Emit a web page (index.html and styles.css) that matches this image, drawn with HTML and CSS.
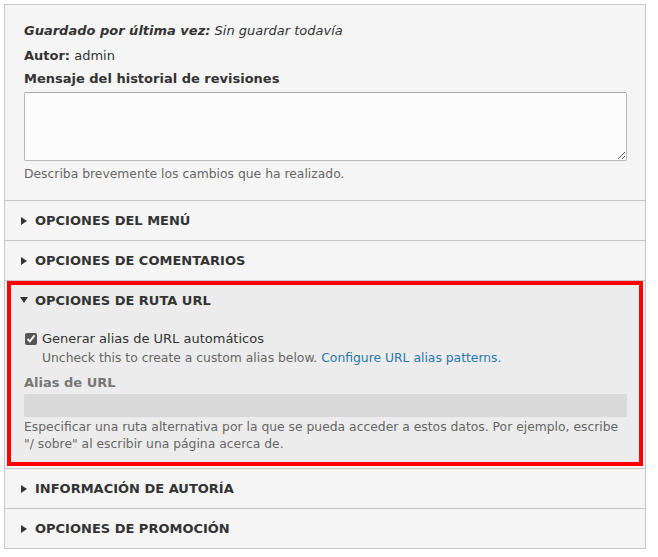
FILE: index.html
```html
<!DOCTYPE html>
<html>
<head>
<meta charset="utf-8">
<link rel="stylesheet" href="styles.css">
</head>
<body>
	<div id="lateral">
		<div class="meta">
			<p class="linha"><em><b>Guardado por última vez:</b> Sin guardar todavía</em></p>
			<p class="linha ultima"><b>Autor:</b> admin</p>
			<label class="rotulo" for="revisao">Mensaje del historial de revisiones</label>
			<textarea id="revisao"></textarea>
			<p class="ajuda">Describa brevemente los cambios que ha realizado.</p>
		</div>

		<details class="grupo">
			<summary>Opciones del menú</summary>
		</details>

		<details class="grupo">
			<summary>Opciones de comentarios</summary>
		</details>

		<div class="grupo aberto">
			<details class="destaque" open>
				<summary>Opciones de ruta URL</summary>
				<div class="corpo">
					<div class="check">
						<input type="checkbox" id="auto" checked>
						<label for="auto">Generar alias de URL automáticos</label>
					</div>
					<p class="ajuda recuo">Uncheck this to create a custom alias below. <a href="#">Configure URL alias patterns.</a></p>
					<label class="rotulo desligado" for="alias">Alias de URL</label>
					<input type="text" id="alias" disabled>
					<p class="ajuda">Especificar una ruta alternativa por la que se pueda acceder a estos datos. Por ejemplo, escribe "/ sobre" al escribir una página acerca de.</p>
				</div>
			</details>
		</div>

		<details class="grupo">
			<summary>Información de autoría</summary>
		</details>

		<details class="grupo">
			<summary>Opciones de promoción</summary>
		</details>
	</div>
</body>
</html>
```

FILE: styles.css
```css
body{
	margin: 0;
	font-family: "DejaVu Sans", "Liberation Sans", sans-serif;
	font-size: 13px;
	color: #333;
	background: #fff;
}

#lateral{
	box-sizing: border-box;
	width: 642px;
	margin: 4px 0 0 4px;
	border: 1px solid #c6c6c6;
	background: #f5f5f5;
}

.meta{
	padding: 17px 18px 18px 19px;
}

.linha{
	margin: 0 0 7px;
	line-height: 18px;
}

.linha.ultima{
	margin-bottom: 5px;
}

.rotulo{
	display: block;
	font-weight: bold;
	line-height: 18px;
	margin-bottom: 4px;
}

textarea{
	display: block;
	box-sizing: border-box;
	width: 603px;
	height: 69px;
	margin: 0;
	border: 1px solid #b8b8b8;
	border-top-color: #a8a8a8;
	border-radius: 2px;
	background: #fcfcfc;
	resize: vertical;
}

.ajuda{
	margin: 5px 0 0;
	font-size: 12.35px;
	line-height: 16px;
	color: #666;
}

.grupo{
	border-top: 1px solid #c6c6c6;
}

.grupo summary{
	list-style: none;
	display: flex;
	align-items: center;
	height: 39px;
	padding-left: 16px;
	font-weight: bold;
	text-transform: uppercase;
	color: #333;
	cursor: pointer;
}

.grupo summary::-webkit-details-marker{
	display: none;
}

.grupo summary::before{
	content: "";
	width: 0;
	height: 0;
	margin-right: 8px;
	border-top: 4px solid transparent;
	border-bottom: 4px solid transparent;
	border-left: 6px solid #333;
}

.destaque{
	margin: 0 2px 2px;
	border: 4px solid #f00;
	background: #ececec;
}

.aberto summary{
	height: 30px;
	padding-left: 9px;
}

.aberto summary::before{
	border-left: 4px solid transparent;
	border-right: 4px solid transparent;
	border-top: 6px solid #333;
	border-bottom: 0;
	margin-right: 7px;
}

.corpo{
	padding: 15px 12px 9px 13px;
}

.check{
	display: flex;
	align-items: center;
	line-height: 18px;
}

.check input{
	width: 12px;
	height: 12px;
	margin: 0 5px 0 1px;
	accent-color: #555;
}

.recuo{
	margin: 1px 0 0 18px;
	line-height: 18px;
}

.recuo a{
	color: #2a78ad;
	text-decoration: none;
}

.desligado{
	color: #777;
	margin: 7px 0 2px;
}

#alias{
	display: block;
	box-sizing: border-box;
	width: 603px;
	height: 23px;
	margin: 0;
	border: 0;
	border-radius: 2px;
	background: #d9d9d9;
}

#alias + .ajuda{
	margin-top: 2px;
	line-height: 17px;
}
```
